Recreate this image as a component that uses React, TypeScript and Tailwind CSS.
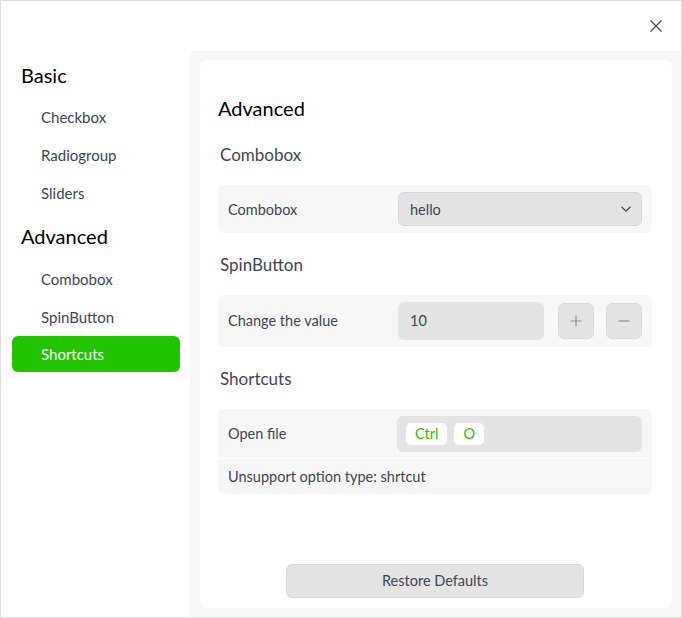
const navItem = "h-[38px] flex items-center pl-[29px] text-[15px] text-[#3c4656]";

const SideNav = () => {
  return (
    <div className="w-[189px] shrink-0 flex flex-col pl-[11px] pr-[10px] pt-[6px]">
      <div className="h-[36px] flex items-center pl-[9px] text-[20px] text-black">Basic</div>
      <div className="h-[5px]" />
      <div className={navItem}>Checkbox</div>
      <div className={navItem}>Radiogroup</div>
      <div className={navItem}>Sliders</div>
      <div className="h-[48px] flex items-center pl-[9px] text-[20px] text-black">Advanced</div>
      <div className={navItem}>Combobox</div>
      <div className={navItem}>SpinButton</div>
      <div className="h-[36px] flex items-center pl-[29px] text-[15px] text-white bg-[#22c400] rounded-[6px]">
        Shortcuts
      </div>
    </div>
  );
};

const Chevron = () => (
  <svg width="14" height="14" viewBox="0 0 14 14" fill="none">
    <path d="M2.5 4.8 L7 9.2 L11.5 4.8" stroke="#3c4656" strokeWidth="1.2" />
  </svg>
);

const App = () => {
  return (
    <div
      className="w-[682px] h-[618px] border border-[#dcdcdc] bg-white flex flex-col"
      style={{ fontFamily: "Lato, 'Noto Sans', sans-serif" }}
    >
      {/* title bar */}
      <div className="h-[50px] shrink-0 flex justify-end items-center pr-[18px]">
        <svg width="14" height="14" viewBox="0 0 14 14">
          <path d="M1.5 1.5 L12.5 12.5 M12.5 1.5 L1.5 12.5" stroke="#3c4656" strokeWidth="1.1" />
        </svg>
      </div>
      <div className="flex flex-1 min-h-0">
        <SideNav />
        <div className="flex-1 bg-[#f7f7f7] p-[9px] pl-[10px]">
          <div className="h-full bg-white rounded-[8px] flex flex-col pl-[18px] pr-[20px] pt-[34px] pb-[10px]">
            <div className="text-[20px] text-black leading-[28px]">Advanced</div>

            <div className="text-[17px] text-[#3c4656] pl-[2px] mt-[21px] leading-[24px]">Combobox</div>
            <div className="mt-[18px] bg-[#f7f7f7] rounded-[6px] h-[48px] flex items-center px-[10px]">
              <div className="w-[170px] text-[14.5px] text-[#3c4656] pt-px">Combobox</div>
              <div className="flex-1 h-[34px] bg-[#e4e4e4] border border-[#d8d8d8] rounded-[6px] flex items-center justify-between pl-[11px] pr-[8px]">
                <span className="text-[14.5px] text-[#3c4656] pt-px">hello</span>
                <Chevron />
              </div>
            </div>

            <div className="text-[17px] text-[#3c4656] pl-[2px] mt-[20px] leading-[24px]">SpinButton</div>
            <div className="mt-[18px] bg-[#f7f7f7] rounded-[6px] h-[52px] flex items-center px-[10px]">
              <div className="w-[170px] text-[14.5px] text-[#3c4656]">Change the value</div>
              <div className="w-[146px] h-[38px] bg-[#e4e4e4] rounded-[6px] flex items-center pl-[12px] text-[14.5px] text-[#3c4656]">
                10
              </div>
              <div className="ml-[14px] w-[36px] h-[36px] bg-[#e4e4e4] border border-[#d8d8d8] rounded-[6px] flex items-center justify-center">
                <svg width="14" height="14" viewBox="0 0 14 14">
                  <path d="M7 1.5 V12.5 M1.5 7 H12.5" stroke="#8a8f98" strokeWidth="1.2" />
                </svg>
              </div>
              <div className="ml-[12px] w-[36px] h-[36px] bg-[#e4e4e4] border border-[#d8d8d8] rounded-[6px] flex items-center justify-center">
                <svg width="14" height="14" viewBox="0 0 14 14">
                  <path d="M1.5 7 H12.5" stroke="#8a8f98" strokeWidth="1.2" />
                </svg>
              </div>
            </div>

            <div className="text-[17px] text-[#3c4656] pl-[2px] mt-[20px] leading-[24px]">Shortcuts</div>
            <div className="mt-[18px] bg-[#f7f7f7] rounded-[6px] flex flex-col">
              <div className="h-[50px] flex items-center px-[10px] border-b border-white">
                <div className="w-[169px] text-[14.5px] text-[#3c4656]">Open file</div>
                <div className="flex-1 h-[36px] bg-[#e4e4e4] rounded-[6px] flex items-center gap-[7px] pl-[9px]">
                  <span className="h-[22px] px-[9px] bg-white rounded-[5px] flex items-center text-[14.5px] text-[#22c400]">Ctrl</span>
                  <span className="h-[22px] px-[9px] bg-white rounded-[5px] flex items-center text-[14.5px] text-[#22c400]">O</span>
                </div>
              </div>
              <div className="h-[35px] flex items-center px-[10px] text-[14.5px] text-[#3c4656]">
                Unsupport option type: shrtcut
              </div>
            </div>

            <div className="flex-1" />
            <div className="flex justify-center">
              <button className="w-[298px] h-[34px] bg-[#e4e4e4] border border-[#d8d8d8] rounded-[6px] text-[14.5px] text-[#3c4656]">
                Restore Defaults
              </button>
            </div>
          </div>
        </div>
      </div>
    </div>
  );
};

export default App;
